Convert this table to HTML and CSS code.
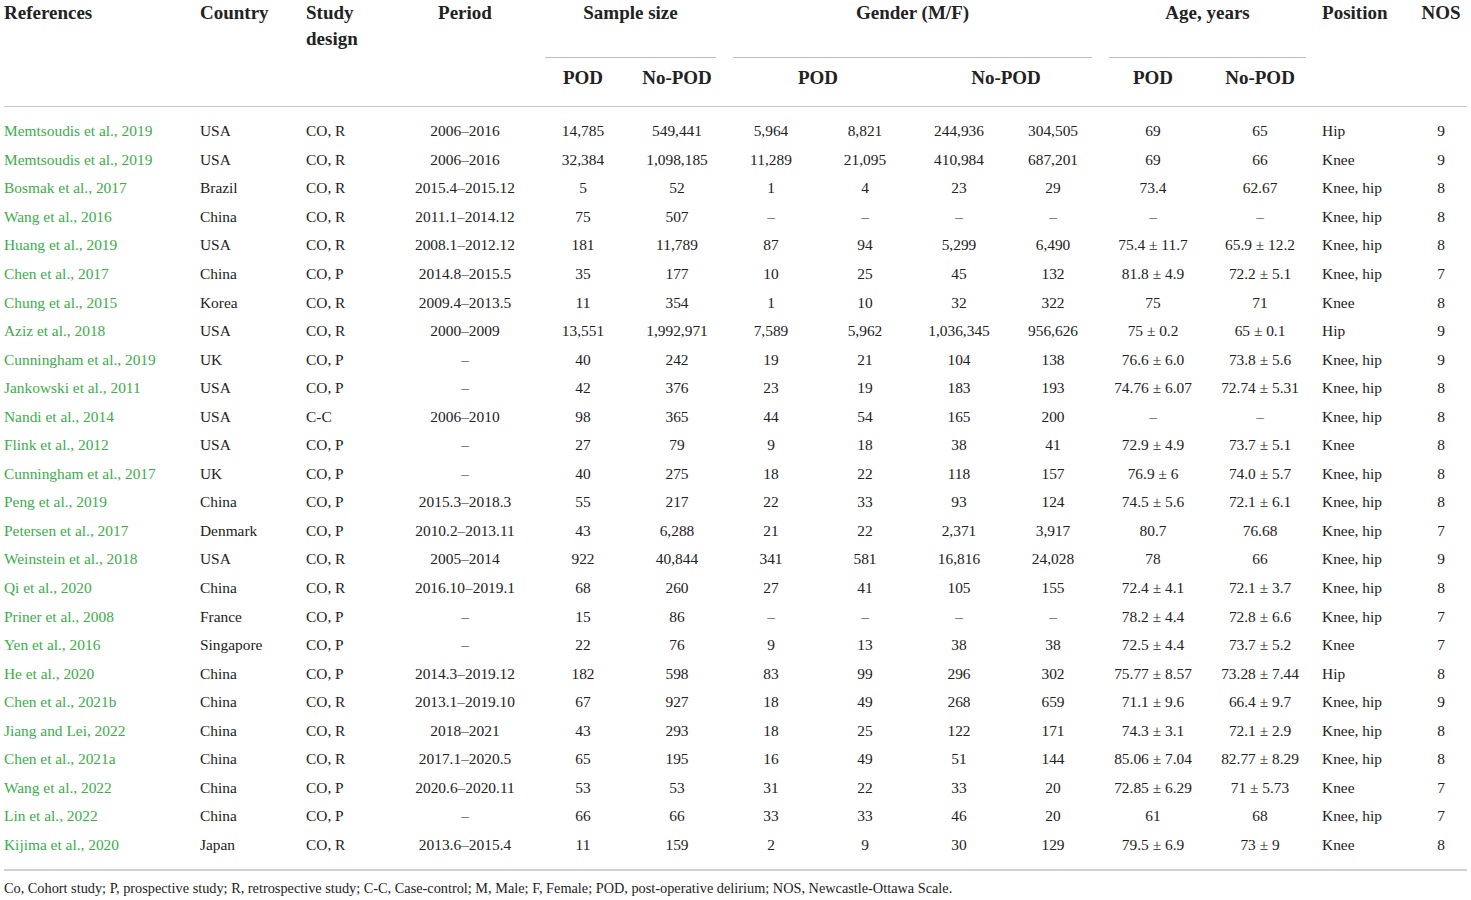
FILE: index.html
```html
<!DOCTYPE html>
<html>
	<head>
		<meta charset="UTF-8">
		<title>Table 1</title>
		<link rel="stylesheet" href="styles.css">
	</head>
	<body>
		<table class="tbl">
			<colgroup>
				<col class="c-ref"><col class="c-country"><col class="c-design"><col class="c-period">
				<col class="c-n1"><col class="c-n2"><col class="c-g1"><col class="c-g2"><col class="c-g3"><col class="c-g4">
				<col class="c-a1"><col class="c-a2"><col class="c-pos"><col class="c-nos">
			</colgroup>
			<thead>
				<tr class="top">
					<th rowspan="2" class="l">References</th>
					<th rowspan="2" class="l">Country</th>
					<th rowspan="2" class="l">Study<br>design</th>
					<th rowspan="2">Period</th>
					<th colspan="2" class="grp"><div>Sample size</div></th>
					<th colspan="4" class="grp"><div>Gender (M/F)</div></th>
					<th colspan="2" class="grp"><div>Age, years</div></th>
					<th rowspan="2" class="l pos">Position</th>
					<th rowspan="2">NOS</th>
				</tr>
				<tr class="sub">
					<th>POD</th>
					<th>No-POD</th>
					<th colspan="2" class="ind">POD</th>
					<th colspan="2" class="ind">No-POD</th>
					<th>POD</th>
					<th>No-POD</th>
				</tr>
			</thead>
			<tbody>
				<tr><td class="ref">Memtsoudis et al., 2019</td><td>USA</td><td>CO, R</td><td>2006–2016</td><td>14,785</td><td>549,441</td><td>5,964</td><td>8,821</td><td>244,936</td><td>304,505</td><td>69</td><td>65</td><td class="pos">Hip</td><td>9</td></tr>
				<tr><td class="ref">Memtsoudis et al., 2019</td><td>USA</td><td>CO, R</td><td>2006–2016</td><td>32,384</td><td>1,098,185</td><td>11,289</td><td>21,095</td><td>410,984</td><td>687,201</td><td>69</td><td>66</td><td class="pos">Knee</td><td>9</td></tr>
				<tr><td class="ref">Bosmak et al., 2017</td><td>Brazil</td><td>CO, R</td><td>2015.4–2015.12</td><td>5</td><td>52</td><td>1</td><td>4</td><td>23</td><td>29</td><td>73.4</td><td>62.67</td><td class="pos">Knee, hip</td><td>8</td></tr>
				<tr><td class="ref">Wang et al., 2016</td><td>China</td><td>CO, R</td><td>2011.1–2014.12</td><td>75</td><td>507</td><td>–</td><td>–</td><td>–</td><td>–</td><td>–</td><td>–</td><td class="pos">Knee, hip</td><td>8</td></tr>
				<tr><td class="ref">Huang et al., 2019</td><td>USA</td><td>CO, R</td><td>2008.1–2012.12</td><td>181</td><td>11,789</td><td>87</td><td>94</td><td>5,299</td><td>6,490</td><td>75.4 ± 11.7</td><td>65.9 ± 12.2</td><td class="pos">Knee, hip</td><td>8</td></tr>
				<tr><td class="ref">Chen et al., 2017</td><td>China</td><td>CO, P</td><td>2014.8–2015.5</td><td>35</td><td>177</td><td>10</td><td>25</td><td>45</td><td>132</td><td>81.8 ± 4.9</td><td>72.2 ± 5.1</td><td class="pos">Knee, hip</td><td>7</td></tr>
				<tr><td class="ref">Chung et al., 2015</td><td>Korea</td><td>CO, R</td><td>2009.4–2013.5</td><td>11</td><td>354</td><td>1</td><td>10</td><td>32</td><td>322</td><td>75</td><td>71</td><td class="pos">Knee</td><td>8</td></tr>
				<tr><td class="ref">Aziz et al., 2018</td><td>USA</td><td>CO, R</td><td>2000–2009</td><td>13,551</td><td>1,992,971</td><td>7,589</td><td>5,962</td><td>1,036,345</td><td>956,626</td><td>75 ± 0.2</td><td>65 ± 0.1</td><td class="pos">Hip</td><td>9</td></tr>
				<tr><td class="ref">Cunningham et al., 2019</td><td>UK</td><td>CO, P</td><td>–</td><td>40</td><td>242</td><td>19</td><td>21</td><td>104</td><td>138</td><td>76.6 ± 6.0</td><td>73.8 ± 5.6</td><td class="pos">Knee, hip</td><td>9</td></tr>
				<tr><td class="ref">Jankowski et al., 2011</td><td>USA</td><td>CO, P</td><td>–</td><td>42</td><td>376</td><td>23</td><td>19</td><td>183</td><td>193</td><td>74.76 ± 6.07</td><td>72.74 ± 5.31</td><td class="pos">Knee, hip</td><td>8</td></tr>
				<tr><td class="ref">Nandi et al., 2014</td><td>USA</td><td>C-C</td><td>2006–2010</td><td>98</td><td>365</td><td>44</td><td>54</td><td>165</td><td>200</td><td>–</td><td>–</td><td class="pos">Knee, hip</td><td>8</td></tr>
				<tr><td class="ref">Flink et al., 2012</td><td>USA</td><td>CO, P</td><td>–</td><td>27</td><td>79</td><td>9</td><td>18</td><td>38</td><td>41</td><td>72.9 ± 4.9</td><td>73.7 ± 5.1</td><td class="pos">Knee</td><td>8</td></tr>
				<tr><td class="ref">Cunningham et al., 2017</td><td>UK</td><td>CO, P</td><td>–</td><td>40</td><td>275</td><td>18</td><td>22</td><td>118</td><td>157</td><td>76.9 ± 6</td><td>74.0 ± 5.7</td><td class="pos">Knee, hip</td><td>8</td></tr>
				<tr><td class="ref">Peng et al., 2019</td><td>China</td><td>CO, P</td><td>2015.3–2018.3</td><td>55</td><td>217</td><td>22</td><td>33</td><td>93</td><td>124</td><td>74.5 ± 5.6</td><td>72.1 ± 6.1</td><td class="pos">Knee, hip</td><td>8</td></tr>
				<tr><td class="ref">Petersen et al., 2017</td><td>Denmark</td><td>CO, P</td><td>2010.2–2013.11</td><td>43</td><td>6,288</td><td>21</td><td>22</td><td>2,371</td><td>3,917</td><td>80.7</td><td>76.68</td><td class="pos">Knee, hip</td><td>7</td></tr>
				<tr><td class="ref">Weinstein et al., 2018</td><td>USA</td><td>CO, R</td><td>2005–2014</td><td>922</td><td>40,844</td><td>341</td><td>581</td><td>16,816</td><td>24,028</td><td>78</td><td>66</td><td class="pos">Knee, hip</td><td>9</td></tr>
				<tr><td class="ref">Qi et al., 2020</td><td>China</td><td>CO, R</td><td>2016.10–2019.1</td><td>68</td><td>260</td><td>27</td><td>41</td><td>105</td><td>155</td><td>72.4 ± 4.1</td><td>72.1 ± 3.7</td><td class="pos">Knee, hip</td><td>8</td></tr>
				<tr><td class="ref">Priner et al., 2008</td><td>France</td><td>CO, P</td><td>–</td><td>15</td><td>86</td><td>–</td><td>–</td><td>–</td><td>–</td><td>78.2 ± 4.4</td><td>72.8 ± 6.6</td><td class="pos">Knee, hip</td><td>7</td></tr>
				<tr><td class="ref">Yen et al., 2016</td><td>Singapore</td><td>CO, P</td><td>–</td><td>22</td><td>76</td><td>9</td><td>13</td><td>38</td><td>38</td><td>72.5 ± 4.4</td><td>73.7 ± 5.2</td><td class="pos">Knee</td><td>7</td></tr>
				<tr><td class="ref">He et al., 2020</td><td>China</td><td>CO, P</td><td>2014.3–2019.12</td><td>182</td><td>598</td><td>83</td><td>99</td><td>296</td><td>302</td><td>75.77 ± 8.57</td><td>73.28 ± 7.44</td><td class="pos">Hip</td><td>8</td></tr>
				<tr><td class="ref">Chen et al., 2021b</td><td>China</td><td>CO, R</td><td>2013.1–2019.10</td><td>67</td><td>927</td><td>18</td><td>49</td><td>268</td><td>659</td><td>71.1 ± 9.6</td><td>66.4 ± 9.7</td><td class="pos">Knee, hip</td><td>9</td></tr>
				<tr><td class="ref">Jiang and Lei, 2022</td><td>China</td><td>CO, R</td><td>2018–2021</td><td>43</td><td>293</td><td>18</td><td>25</td><td>122</td><td>171</td><td>74.3 ± 3.1</td><td>72.1 ± 2.9</td><td class="pos">Knee, hip</td><td>8</td></tr>
				<tr><td class="ref">Chen et al., 2021a</td><td>China</td><td>CO, R</td><td>2017.1–2020.5</td><td>65</td><td>195</td><td>16</td><td>49</td><td>51</td><td>144</td><td>85.06 ± 7.04</td><td>82.77 ± 8.29</td><td class="pos">Knee, hip</td><td>8</td></tr>
				<tr><td class="ref">Wang et al., 2022</td><td>China</td><td>CO, P</td><td>2020.6–2020.11</td><td>53</td><td>53</td><td>31</td><td>22</td><td>33</td><td>20</td><td>72.85 ± 6.29</td><td>71 ± 5.73</td><td class="pos">Knee</td><td>7</td></tr>
				<tr><td class="ref">Lin et al., 2022</td><td>China</td><td>CO, P</td><td>–</td><td>66</td><td>66</td><td>33</td><td>33</td><td>46</td><td>20</td><td>61</td><td>68</td><td class="pos">Knee, hip</td><td>7</td></tr>
				<tr><td class="ref">Kijima et al., 2020</td><td>Japan</td><td>CO, R</td><td>2013.6–2015.4</td><td>11</td><td>159</td><td>2</td><td>9</td><td>30</td><td>129</td><td>79.5 ± 6.9</td><td>73 ± 9</td><td class="pos">Knee</td><td>8</td></tr>
			</tbody>
		</table>
		<p class="note">Co, Cohort study; P, prospective study; R, retrospective study; C-C, Case-control; M, Male; F, Female; POD, post-operative delirium; NOS, Newcastle-Ottawa Scale.</p>
	</body>
</html>
```

FILE: styles.css
```css
body{margin:0;background:#fff;color:#222;font-family:"Liberation Serif","Times New Roman",serif;}

.tbl{margin-left:4px;width:1463px;table-layout:fixed;border-collapse:collapse;}

/* column widths */
.c-ref{width:196px;}
.c-country{width:106px;}
.c-design{width:94px;}
.c-period{width:130px;}
.c-n1{width:106px;}
.c-n2{width:82px;}
.c-g1{width:106px;}
.c-g2{width:82px;}
.c-g3{width:106px;}
.c-g4{width:82px;}
.c-a1{width:118px;}
.c-a2{width:96px;}
.c-pos{width:107px;}
.c-nos{width:52px;}

/* header */
.tbl th{font-size:19px;font-weight:bold;line-height:26px;padding:0;text-align:center;vertical-align:top;white-space:nowrap;}
.tbl th.l{text-align:left;}
.tbl th.pos{padding-left:14px;}
.tbl thead{border-bottom:1px solid #c8c8c8;}
.tbl tr.top th{height:58px;}
.tbl th.grp div{height:57px;margin:0 2px 0 15px;border-bottom:1px solid #bdbdbd;}
.tbl tr.sub th{height:41px;padding:7px 0 0;}
.tbl tr.sub th.ind{padding-left:12px;}

/* body */
.tbl td{font-size:15.4px;line-height:20px;height:28.56px;padding:0;text-align:center;vertical-align:middle;white-space:nowrap;}
.tbl td:nth-child(2),.tbl td:nth-child(3){text-align:left;}
.tbl td.ref{text-align:left;color:#3aae49;}
.tbl td.pos{text-align:left;padding-left:14px;}
.tbl tbody tr:first-child td{padding-top:10px;}
.tbl tbody tr:last-child td{padding-bottom:10px;}
.tbl tbody{border-bottom:2px solid #d2d2d2;}

.note{margin:8px 0 0 4px;font-size:14.3px;line-height:18px;color:#222;}
```
